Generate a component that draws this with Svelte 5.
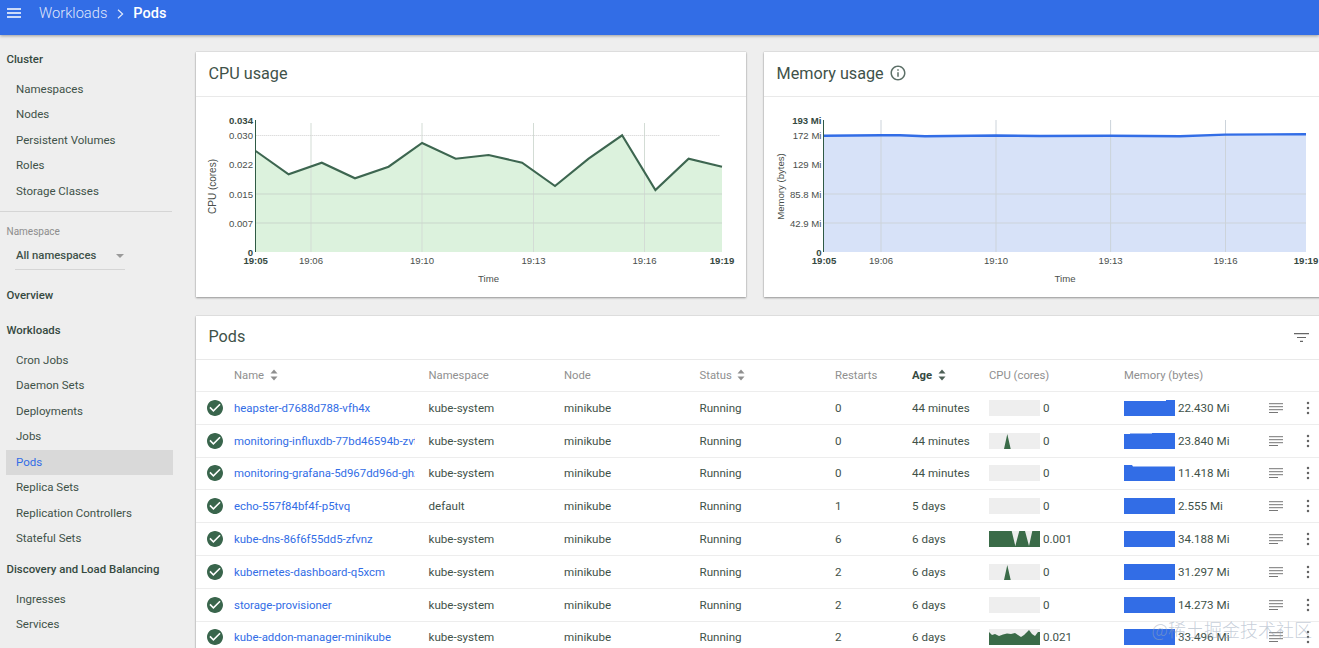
<script>
  const cluster = ['Namespaces', 'Nodes', 'Persistent Volumes', 'Roles', 'Storage Classes'];
  const workloads = ['Cron Jobs', 'Daemon Sets', 'Deployments', 'Jobs', 'Pods', 'Replica Sets', 'Replication Controllers', 'Stateful Sets'];
  const discovery = ['Ingresses', 'Services'];

  const peak = '0,16 15,16 18.3,1 21.7,16 51,16';
  const rows = [
    { name: 'heapster-d7688d788-vfh4x', ns: 'kube-system', restarts: 0, age: '44 minutes', spark: '', cpu: '0', mem: '22.430 Mi', bar: '0,1 42,1 42,0 51,0 51,16 0,16' },
    { name: 'monitoring-influxdb-77bd46594b-zvt6d', ns: 'kube-system', restarts: 0, age: '44 minutes', spark: peak, cpu: '0', mem: '23.840 Mi', bar: '0,1 6,1 6,0.4 28,0.4 28,0 51,0 51,16 0,16' },
    { name: 'monitoring-grafana-5d967dd96d-ghxzp', ns: 'kube-system', restarts: 0, age: '44 minutes', spark: '', cpu: '0', mem: '11.418 Mi', bar: '0,0 8,0 9,1.6 51,1.6 51,16 0,16' },
    { name: 'echo-557f84bf4f-p5tvq', ns: 'default', restarts: 1, age: '5 days', spark: '', cpu: '0', mem: '2.555 Mi', bar: '0,0 51,0 51,16 0,16' },
    { name: 'kube-dns-86f6f55dd5-zfvnz', ns: 'kube-system', restarts: 6, age: '6 days', spark: '0,0 22.7,0 26.3,15 30.3,0 36,0 40,15 43.3,0 51,0 51,16 0,16', cpu: '0.001', mem: '34.188 Mi', bar: '0,0 51,0 51,16 0,16' },
    { name: 'kubernetes-dashboard-q5xcm', ns: 'kube-system', restarts: 2, age: '6 days', spark: peak, cpu: '0', mem: '31.297 Mi', bar: '0,0 51,0 51,16 0,16' },
    { name: 'storage-provisioner', ns: 'kube-system', restarts: 2, age: '6 days', spark: '', cpu: '0', mem: '14.273 Mi', bar: '0,0 51,0 51,16 0,16' },
    { name: 'kube-addon-manager-minikube', ns: 'kube-system', restarts: 2, age: '6 days', spark: '0,16 0,3 3,6 6,5 10,7 14,5.5 18,4.5 22,5 26,4 29,6 32,8 35,6 40,1 43,5 46,7 49,3 51,3 51,16', cpu: '0.021', mem: '33.496 Mi', bar: '0,0 51,0 51,16 0,16' }
  ];

  const cpuPts = [[255.7,151],[288.6,174.3],[321.8,162.7],[355,178.3],[388.6,166.7],[422.1,143],[455.7,158.7],[488.6,155],[522.1,162.7],[555,186],[588.6,158.7],[622.1,135.3],[655.4,190],[688.6,158.7],[722,166.7]];
  const memPts = [[823.5,135.7],[881,135.3],[900,135.2],[925,136.3],[996,135.5],[1040,136],[1110,135.7],[1180,136.2],[1225,134.6],[1306,134.2]];
  const toLine = (p) => p.map((q) => q.join(',')).join(' ');
  const toArea = (p) => `${p[0][0]},252 ${toLine(p)} ${p[p.length - 1][0]},252`;

  const cpuY = [['0.030', 135.5], ['0.022', 164.5], ['0.015', 194], ['0.007', 223]];
  const cpuX = [['19:06', 311], ['19:10', 422], ['19:13', 533.5], ['19:16', 644.5]];
  const memY = [['172 Mi', 135.5], ['129 Mi', 164.5], ['85.8 Mi', 194], ['42.9 Mi', 223]];
  const memX = [['19:06', 881], ['19:10', 996], ['19:13', 1110.6], ['19:16', 1225.5]];
</script>

{#snippet sort()}
  <svg class="sort" viewBox="0 0 8 12" width="8" height="12"><path d="M4 0.5 7.5 4.5H.5zM4 11.5.5 7.5h7z" /></svg>
{/snippet}

<div class="app">
  <header class="top">
    <svg class="menu" viewBox="0 0 14 10" width="14" height="10"><path d="M0 1h14M0 5h14M0 9h14" /></svg>
    <span class="crumb">Workloads</span>
    <svg class="chev" viewBox="0 0 7 10" width="7" height="10"><path d="M1 .8 5.6 5 1 9.2" /></svg>
    <span class="here">Pods</span>
  </header>

  <div class="body">
    <nav class="side">
      <div class="head">Cluster</div>
      {#each cluster as c}<div class="item">{c}</div>{/each}
      <div class="divider"></div>
      <div class="nslabel">Namespace</div>
      <div class="nsselect"><span>All namespaces</span><i class="tri"></i></div>
      <div class="head">Overview</div>
      <div class="head">Workloads</div>
      {#each workloads as c}<div class="item" class:active={c === 'Pods'}>{c}</div>{/each}
      <div class="head">Discovery and Load Balancing</div>
      {#each discovery as c}<div class="item">{c}</div>{/each}
    </nav>

    <main class="main">
      <div class="charts">
        <section class="card">
          <h2 class="title">CPU usage</h2>
          <svg class="chart" viewBox="196 97 550 200" width="550" height="200">
            <polygon class="cpuarea" points={toArea(cpuPts)} />
            {#each cpuX as [, x]}<line class="grid" x1={x} x2={x} y1="123" y2="252" />{/each}
            <line class="gridtop" x1="255.7" x2="720" y1="135.5" y2="135.5" />
            <line class="gridh" x1="255.7" x2="722" y1="194" y2="194" />
            <line class="gridh" x1="255.7" x2="722" y1="223" y2="223" />
            <polyline class="cpuline" points={toLine(cpuPts)} />
            <line class="axis" x1="255.5" x2="255.5" y1="120" y2="252" />
            <text class="tick b" x="253" y="124" text-anchor="end">0.034</text>
            {#each cpuY as [t, y]}<text class="tick" x="253" y={y + 3.5} text-anchor="end">{t}</text>{/each}
            <text class="tick b" x="253" y="256" text-anchor="end">0</text>
            <text class="tick b" x="255.7" y="264" text-anchor="middle">19:05</text>
            {#each cpuX as [t, x]}<text class="tick" {x} y="264" text-anchor="middle">{t}</text>{/each}
            <text class="tick b" x="722" y="264" text-anchor="middle">19:19</text>
            <text class="tick" x="488.5" y="282" text-anchor="middle">Time</text>
            <text class="tick big" transform="translate(216 186.5) rotate(-90)" text-anchor="middle">CPU (cores)</text>
          </svg>
        </section>

        <section class="card">
          <h2 class="title">
            Memory usage
            <svg class="info" viewBox="0 0 24 24" width="18" height="18"><path d="M11 7h2v2h-2zm0 4h2v6h-2zm1-9C6.48 2 2 6.48 2 12s4.48 10 10 10 10-4.48 10-10S17.52 2 12 2zm0 18c-4.41 0-8-3.59-8-8s3.59-8 8-8 8 3.59 8 8-3.59 8-8 8z" /></svg>
          </h2>
          <svg class="chart" viewBox="764 97 555 200" width="555" height="200">
            <polygon class="memarea" points={toArea(memPts)} />
            {#each memX as [, x]}<line class="gridm" x1={x} x2={x} y1="120" y2="252" />{/each}
            <line class="gridm" x1="823.5" x2="1306" y1="194" y2="194" />
            <line class="gridm" x1="823.5" x2="1306" y1="223" y2="223" />
            <polyline class="memline" points={toLine(memPts)} />
            <line class="axis" x1="823.5" x2="823.5" y1="120" y2="252" />
            <text class="tick b" x="821.5" y="124" text-anchor="end">193 Mi</text>
            {#each memY as [t, y]}<text class="tick" x="821.5" y={y + 3.5} text-anchor="end">{t}</text>{/each}
            <text class="tick b" x="821.5" y="256" text-anchor="end">0</text>
            <text class="tick b" x="824" y="264" text-anchor="middle">19:05</text>
            {#each memX as [t, x]}<text class="tick" {x} y="264" text-anchor="middle">{t}</text>{/each}
            <text class="tick b" x="1306" y="264" text-anchor="middle">19:19</text>
            <text class="tick" x="1065" y="282" text-anchor="middle">Time</text>
            <text class="tick" transform="translate(784 186.5) rotate(-90)" text-anchor="middle">Memory (bytes)</text>
          </svg>
        </section>
      </div>

      <section class="card pods">
        <div class="podhead">
          <h2 class="title flat">Pods</h2>
          <svg class="filter" viewBox="0 0 15 9" width="15" height="9"><path d="M0 .7h15M3 4.5h9M6 8.3h3" /></svg>
        </div>
        <div class="row th">
          <span></span>
          <span class="h">Name {@render sort()}</span>
          <span class="h">Namespace</span>
          <span class="h">Node</span>
          <span class="h">Status {@render sort()}</span>
          <span class="h">Restarts</span>
          <span class="h on">Age {@render sort()}</span>
          <span class="h">CPU (cores)</span>
          <span class="h">Memory (bytes)</span>
        </div>
        {#each rows as r}
          <div class="row">
            <svg class="ok" viewBox="2 2 20 20" width="16" height="16"><path d="M12 2C6.48 2 2 6.48 2 12s4.48 10 10 10 10-4.48 10-10S17.52 2 12 2zm-2 15-5-5 1.41-1.41L10 14.17l7.59-7.59L19 8l-9 9z" /></svg>
            <a class="name">{r.name}</a>
            <span>{r.ns}</span>
            <span>minikube</span>
            <span>Running</span>
            <span>{r.restarts}</span>
            <span>{r.age}</span>
            <span class="metric">
              <svg class="spark" viewBox="0 0 51 16" width="51" height="16">
                {#if r.spark}<polygon points={r.spark} />{/if}
              </svg>
              {r.cpu}
            </span>
            <span class="metric">
              <svg class="bar" viewBox="0 0 51 16" width="51" height="16"><polygon points={r.bar} /></svg>
              {r.mem}
            </span>
            <svg class="logs" viewBox="0 0 14 10" width="14" height="10"><path d="M0 .7h14M0 3.7h14M0 6.7h14M0 9.5h9" /></svg>
            <svg class="dots" viewBox="0 0 4 14" width="4" height="14"><circle cx="2" cy="2" r="1.25" /><circle cx="2" cy="7" r="1.25" /><circle cx="2" cy="12" r="1.25" /></svg>
          </div>
        {/each}
      </section>
    </main>
  </div>

  <div class="mark">@稀土掘金技术社区</div>
</div>

<style>
  :global(body) { margin: 0; background: #eeeeee; }
  .app {
    position: relative;
    height: 648px;
    overflow: hidden;
    display: flex;
    flex-direction: column;
    font-family: Roboto, "Liberation Sans", sans-serif;
    font-size: 11.6px;
    color: #3f5249;
    background: #eeeeee;
  }
  .top {
    flex: 0 0 35px;
    box-sizing: border-box;
    padding: 0 0 9px 7px;
    display: flex;
    align-items: center;
    background: #326de6;
    color: #fff;
    box-shadow: 0 1px 3px rgba(0, 0, 0, 0.35);
    position: relative;
    z-index: 1;
  }
  .menu path { stroke: #fff; stroke-width: 1.4; fill: none; }
  .crumb { margin-left: 18px; font-size: 14.7px; font-weight: 300; color: rgba(255, 255, 255, 0.85); }
  .chev { margin: 1px 9px 0 10px; }
  .chev path { stroke: rgba(255, 255, 255, 0.85); stroke-width: 1.2; fill: none; }
  .here { font-size: 14.5px; font-weight: 500; }

  .body { flex: 1; display: flex; min-height: 0; }
  .side {
    flex: 0 0 196px;
    box-sizing: border-box;
    padding-top: 6.6px;
    display: flex;
    flex-direction: column;
    font-size: 11.5px;
  }
  .head {
    flex: 0 0 25.5px;
    line-height: 25.5px;
    margin: 5.4px 0 4.4px;
    padding-left: 6.5px;
    font-weight: 500;
    font-size: 11.4px;
    color: #35493f;
  }
  .item {
    flex: 0 0 25.5px;
    line-height: 25.5px;
    margin-left: 6px;
    width: 167px;
    box-sizing: border-box;
    padding-left: 10px;
  }
  .item.active { background: #d9d9d9; color: #326de6; }
  .divider { height: 1px; width: 172px; margin-top: 6.6px; background: #d5d5d5; }
  .nslabel { margin: 12.9px 0 0 6.5px; height: 14px; line-height: 14px; font-size: 10px; color: #8d8d8d; }
  .nsselect {
    box-sizing: border-box;
    margin: 4.2px 0 7.6px 15px;
    padding-left: 1px;
    width: 110px;
    height: 26.5px;
    border-bottom: 1px solid #d5d5d5;
    display: flex;
    align-items: center;
    justify-content: space-between;
    font-weight: 500;
    font-size: 11.3px;
  }
  .tri {
    margin-right: 1px;
    border-style: solid;
    border-width: 4px 4px 0;
    border-color: #9a9a9a transparent transparent;
  }

  .main {
    flex: 0 0 1140px;
    box-sizing: border-box;
    padding-top: 17px;
    display: flex;
    flex-direction: column;
    gap: 19px;
  }
  .charts { display: grid; grid-template-columns: 550px 1fr; gap: 18px; }
  .card { background: #fff; box-shadow: 0 1px 2px rgba(0, 0, 0, 0.35), 0 0 1px rgba(0, 0, 0, 0.25); }
  .title {
    margin: 0;
    box-sizing: border-box;
    height: 45px;
    padding: 0 0 2px 12.5px;
    display: flex;
    align-items: center;
    gap: 5px;
    font-size: 16.2px;
    font-weight: 400;
    color: #3f5249;
    border-bottom: 1px solid #e9e9e9;
  }
  .title.flat { border: 0; height: 43.5px; }
  .info path { fill: #5d7068; }
  .chart { display: block; }

  .cpuarea { fill: #dcf2dd; }
  .memarea { fill: #d7e2f8; }
  .grid { stroke: #d3dcd5; stroke-width: 1; }
  .gridh { stroke: #c9d6cb; stroke-width: 1; }
  .gridm { stroke: #ccd3da; stroke-width: 1; }
  .gridtop { stroke: #cfcfcf; stroke-width: 1; stroke-dasharray: 1 1; }
  .cpuline { fill: none; stroke: #3d6650; stroke-width: 2.1; }
  .memline { fill: none; stroke: #326de6; stroke-width: 2.4; }
  .axis { stroke: #2f5a45; stroke-width: 1; }
  .tick { font-family: "Liberation Sans", Arial, sans-serif; font-size: 9.6px; fill: #4a4f4c; }
  .tick.b { font-weight: 700; fill: #35493f; }
  .tick.big { font-size: 10px; }

  .pods { height: 400px; }
  .podhead {
    display: flex;
    align-items: center;
    justify-content: space-between;
    height: 43.5px;
    box-sizing: border-box;
    padding-right: 27px;
    border-bottom: 1px solid #e9e9e9;
  }
  .filter path { stroke: #666; stroke-width: 1.2; fill: none; }
  .row {
    display: grid;
    grid-template-columns: 38px 194.5px 135.5px 135.5px 135.5px 77px 77px 135px 145px 37px 4px;
    align-items: center;
    box-sizing: border-box;
    height: 32.8px;
    border-bottom: 1px solid #ededed;
  }
  .row.th { height: 32.5px; }
  .h { display: flex; align-items: center; gap: 5.5px; font-size: 11.3px; color: #8f8f8f; }
  .h.on { color: #35493f; font-weight: 700; }
  .sort path { fill: #8f8f8f; }
  .h.on .sort path { fill: #4d5f56; }
  .ok { margin-left: 11px; }
  .ok path { fill: #39654c; }
  .name {
    color: #326de6;
    font-size: 11.4px;
    overflow: hidden;
    white-space: nowrap;
    margin-right: 13.5px;
  }
  .metric { display: flex; align-items: center; gap: 3px; }
  .spark { background: #eeeeee; }
  .spark polygon { fill: #3a6b48; }
  .bar polygon { fill: #326de6; }
  .logs path { stroke: #777; stroke-width: 1; fill: none; }
  .dots circle { fill: #666; }
  .mark {
    position: absolute;
    right: 7px;
    bottom: 6px;
    font-family: "Noto Sans CJK SC", sans-serif;
    font-size: 18px;
    font-weight: 300;
    color: rgba(150, 165, 185, 0.55);
  }
</style>
